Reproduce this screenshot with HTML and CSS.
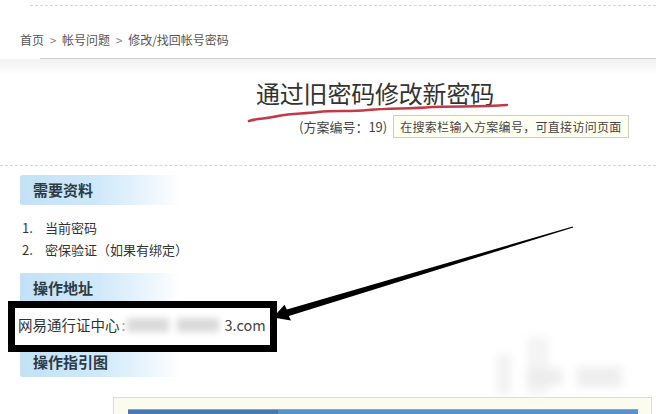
FILE: index.html
```html
<!DOCTYPE html>
<html lang="zh">
<head>
<meta charset="utf-8">
<link rel="stylesheet" href="styles.css">
</head>
<body>
<div class="page">
  <div class="topline"></div>
  <div class="crumb">首页 <span class="gt">&gt;</span> 帐号问题 <span class="gt">&gt;</span> 修改/找回帐号密码</div>
  <div class="rule"></div>
  <div class="rule-shadow"></div>
  <h1 class="title">通过旧密码修改新密码</h1>
  <div class="meta">
    <span class="code">(方案编号：19)</span>
    <span class="tip">在搜索栏输入方案编号，可直接访问页面</span>
  </div>
  <div class="dashed"></div>

  <h2 class="sec sec-first">需要资料</h2>
  <ol class="list">
    <li><span class="num">1.</span>当前密码</li>
    <li><span class="num">2.</span>密保验证（如果有绑定）</li>
  </ol>
  <h2 class="sec sec-addr">操作地址</h2>
  <div class="addr">网易通行证中心<span class="colon">:</span><span class="blur"><i></i><i></i></span><span class="dom">3.com</span></div>
  <h2 class="sec sec-guide">操作指引图</h2>
  <div class="shot">
    <div class="shot-bar"><div class="shot-bar-left"></div></div>
  </div>

  <div class="hl-box"></div>
  <div class="watermark"><i class="w1"></i><i class="w2"></i><i class="w3"></i><i class="w4"></i></div>
  <svg class="annot" width="656" height="414" viewBox="0 0 656 414">
    <path d="M249 121 C258 118 266 119 278 116 C292 113 302 114 318 112 C335 110 350 112 368 110 C390 108 410 109 432 107 C458 106 482 107 507 105" fill="none" stroke="#c23a48" stroke-width="2.6" stroke-linecap="round"/>
    <polygon points="273,317.5 291,320.5 288.8,316 573.3,227.5 572.7,226.5 286.8,309.6 284.5,304.8" fill="#000"/>
  </svg>
</div>
</body>
</html>
```
FILE: styles.css
```css
html, body {
  margin: 0;
  padding: 0;
  background: #fff;
}
body {
  font-family: "Noto Sans CJK SC", "Noto Sans", sans-serif;
  color: #333;
  width: 656px;
  height: 414px;
  overflow: hidden;
}
.page {
  position: relative;
  width: 656px;
  height: 414px;
  overflow: hidden;
}
.topline {
  height: 5px;
  margin-left: 30px;
  border-bottom: 1px dashed #d4d4d4;
}
.crumb {
  margin-top: 26px;
  margin-left: 20px;
  height: 16px;
  line-height: 16px;
  font-size: 12px;
  color: #555;
}
.crumb .gt {
  color: #888;
  margin: 0 3px;
}
.rule {
  margin-top: 10px;
  margin-left: 40px;
  height: 0;
  border-top: 1px solid #cfcfcf;
}
.rule-shadow {
  height: 16px;
  background: linear-gradient(to bottom, #f1f1f1, #fff);
}
.title {
  margin: 3px 0 0 256px;
  font-size: 24px;
  line-height: 30px;
  font-weight: normal;
  color: #333;
  letter-spacing: -0.2px;
}
.meta {
  margin-top: 7px;
  margin-left: 299px;
  height: 23px;
  display: flex;
  align-items: center;
  gap: 6px;
}
.code {
  font-size: 13px;
  color: #444;
}
.tip {
  height: 21px;
  line-height: 21px;
  padding: 0 6px;
  font-size: 12px;
  color: #444;
  background: #fffff2;
  border: 1px solid #cfcfbf;
  letter-spacing: 0.3px;
}
.dashed {
  margin-top: 27px;
  height: 0;
  border-top: 1px dashed #d4d4d4;
}
.sec {
  margin: 0 0 0 20px;
  width: 147px;
  height: 30px;
  line-height: 30px;
  padding-left: 13px;
  font-size: 15px;
  font-weight: bold;
  color: #2c3b46;
  background: linear-gradient(to right, #c3e1f5 0%, #d0e9f9 50%, #ecf6fd 82%, #ffffff 100%);
  border-radius: 2px;
}
.sec-first { margin-top: 9px; }
.list {
  list-style: none;
  margin: 12px 0 0 22px;
  padding: 0;
  font-size: 13px;
  line-height: 22px;
  color: #333;
}
.num {
  display: inline-block;
  width: 23px;
}
.sec-addr { margin-top: 12px; }
.addr {
  margin: 11px 0 0 18px;
  height: 22px;
  line-height: 22px;
  font-size: 14.5px;
  color: #333;
  display: flex;
  align-items: center;
}
.colon {
  margin: 0 1px 0 2px;
  color: #999;
}
.blur {
  display: inline-flex;
  width: 98px;
  height: 22px;
  align-items: center;
  gap: 8px;
  filter: blur(3px);
}
.blur i {
  display: block;
  height: 14px;
  background: #dadada;
  width: 42px;
}
.dom { color: #444; }
.sec-guide { margin-top: 11px; }
.shot {
  margin: 20px 0 0 113px;
  width: 510px;
  height: 40px;
  padding: 11px 13px 0 14px;
  background: #fbfbee;
  border: 1px solid #dcdcd0;
}
.shot-bar {
  height: 30px;
  background: #5a8fd0;
  border-top: 1px solid #7aa6dc;
}
.shot-bar-left {
  width: 150px;
  height: 100%;
  background: #4877b6;
}
.hl-box {
  position: absolute;
  left: 8px;
  top: 301px;
  width: 255px;
  height: 37px;
  border: 7px solid #000;
}
.watermark {
  position: absolute;
  left: 497px;
  top: 337px;
  width: 128px;
  height: 58px;
  filter: blur(4px);
}
.watermark i {
  position: absolute;
  display: block;
  background: #f2f2f2;
}
.watermark .w1 { left: 0; top: 17px; width: 14px; height: 40px; }
.watermark .w2 { left: 30px; top: 0; width: 22px; height: 58px; background: #f4f4f4; }
.watermark .w3 { left: 30px; top: 32px; width: 35px; height: 16px; background: #ececec; }
.watermark .w4 { left: 80px; top: 30px; width: 45px; height: 20px; background: #eeeeee; }
.annot {
  position: absolute;
  left: 0;
  top: 0;
  pointer-events: none;
}
```
